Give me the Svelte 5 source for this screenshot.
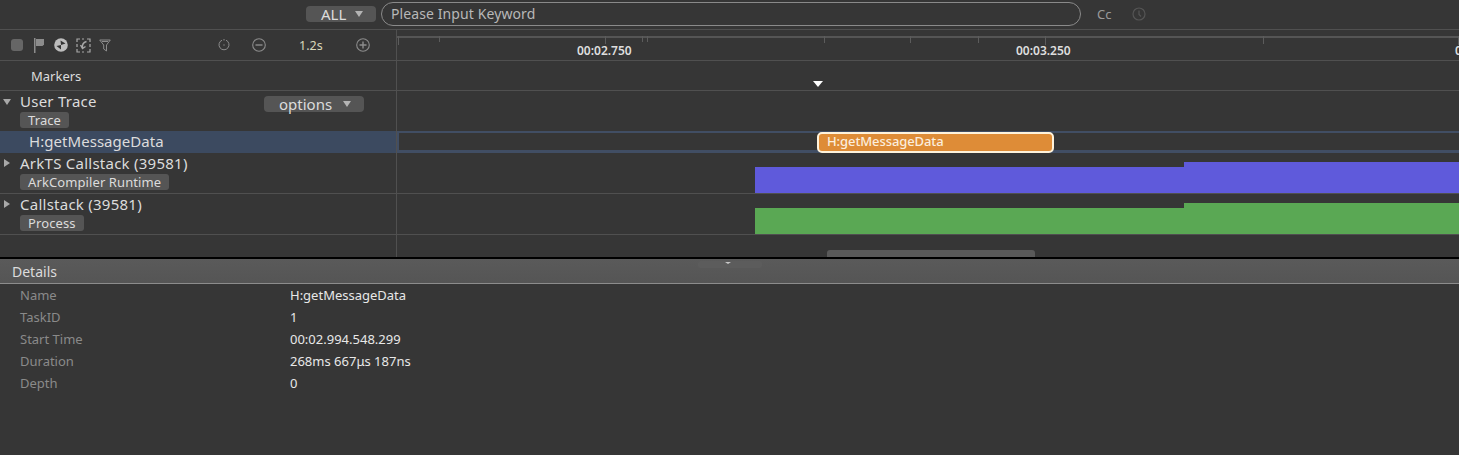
<script>
  const rows = [
    { name: 'ArkTS Callstack (39581)', tag: 'ArkCompiler Runtime', color: '#5f5adb' },
    { name: 'Callstack (39581)', tag: 'Process', color: '#5aa854' },
  ];
  const details = [
    ['Name', 'H:getMessageData'],
    ['TaskID', '1'],
    ['Start Time', '00:02.994.548.299'],
    ['Duration', '268ms 667μs 187ns'],
    ['Depth', '0'],
  ];
  const ticks = [
    { x: 1, h: 9 }, { x: 42, h: 6 }, { x: 208, h: 8 }, { x: 245, h: 6 }, { x: 250, h: 6 }, { x: 427, h: 7 },
    { x: 513, h: 7 }, { x: 581, h: 7 }, { x: 648, h: 9 }, { x: 866, h: 8 }, { x: 1061, h: 9 },
  ];
</script>

<main>
  <header class="search-bar">
    <div class="select all">ALL<span class="caret"></span></div>
    <div class="search">Please Input Keyword</div>
    <span class="cc">Cc</span>
    <svg class="history" width="14" height="14" viewBox="0 0 14 14" fill="none" stroke="#555" stroke-width="1.2">
      <circle cx="7" cy="7" r="6" />
      <path d="M7 3.5V7.5L9 9.5" />
    </svg>
  </header>

  <section class="trace">
    <div class="row toolbar-row">
      <div class="side toolbar">
        <div class="tools">
          <span class="stop"></span>
          <svg class="flag" width="10" height="15" viewBox="0 0 10 15" fill="#8c8c8c"><rect x="0" y="0" width="1.5" height="15" /><path d="M2 1H10V6.500L8.500 8H2Z" /></svg>
          <svg width="14" height="14" viewBox="0 0 14 14"><circle cx="7" cy="7" r="6.800" fill="#bdbdbd" /><path d="M6.500 2.500L11.500 5.500L7 7ZM7 7L2.500 8L7 11.500Z" fill="#333" /></svg>
          <svg width="15" height="15" viewBox="0 0 15 15" fill="none" stroke="#a8a8a8" stroke-width="1.2"><path d="M1 4V1H4M6 1H8M11 1H14V4M14 6V9M14 11V14H11M8 14H6M4 14H1V11M1 9V6" /><path d="M10.500 3.500C7.500 4.500 6 6.500 6.500 9.500M4.500 7L6.500 10.500L9.500 8.500" stroke-width="1.4" /></svg>
          <svg width="12" height="13" viewBox="0 0 12 13" fill="none" stroke="#8c8c8c" stroke-width="1"><path d="M0.700 1H11.300L7.500 6V12L4.700 10V6Z" /><path d="M3 2.500H9" /></svg>
        </div>
        <svg class="reset" width="12" height="12" viewBox="0 0 12 12" fill="none" stroke="#8c8c8c" stroke-width="1"><path d="M4 1.200A5 5 0 1 0 8 1.200" /><path d="M6 0V1.500" /><circle cx="6" cy="6" r="0.700" fill="#8c8c8c" stroke="none" /></svg>
        <svg class="minus" width="14" height="14" viewBox="0 0 14 14" fill="none" stroke="#8c8c8c" stroke-width="1.100"><circle cx="7" cy="7" r="6.300" /><path d="M3.500 7H10.500" stroke-width="1.400" /></svg>
        <span class="scale">1.2s</span>
        <svg class="plus" width="14" height="14" viewBox="0 0 14 14" fill="none" stroke="#8c8c8c" stroke-width="1.100"><circle cx="7" cy="7" r="6.300" /><path d="M3.500 7H10.500M7 3.500V10.500" stroke-width="1.400" /></svg>
      </div>
      <div class="lane ruler">
        <div class="ruler-line"></div>
        {#each ticks as t}
          <span class="tick" style="left: {t.x}px; height: {t.h}px"></span>
        {/each}
        <span class="time" style="left: 180px">00:02.750</span>
        <span class="time" style="left: 619px">00:03.250</span>
        <span class="time" style="left: 1058px">00:03.750</span>
      </div>
    </div>

    <div class="row markers-row">
      <div class="side markers">Markers</div>
      <div class="lane"><span class="marker"></span></div>
    </div>

    <div class="row track">
      <div class="side">
        <div class="track-name"><span class="arrow open"></span>User Trace</div>
        <span class="tag">Trace</span>
        <div class="select options">options<span class="caret"></span></div>
      </div>
      <div class="lane"></div>
    </div>

    <div class="row selected">
      <div class="side">H:getMessageData</div>
      <div class="lane">
        <div class="slice">H:getMessageData</div>
      </div>
    </div>

    {#each rows as r}
      <div class="row track">
        <div class="side">
          <div class="track-name"><span class="arrow"></span>{r.name}</div>
          <span class="tag">{r.tag}</span>
        </div>
        <div class="lane">
          <span class="area low" style="background: {r.color}"></span>
          <span class="area high" style="background: {r.color}"></span>
        </div>
      </div>
    {/each}

    <div class="row empty">
      <div class="side"></div>
      <div class="lane"><span class="scrollbar"></span></div>
    </div>
  </section>

  <section class="details">
    <div class="details-title">Details<span class="grip"></span></div>
    <div class="details-body">
      {#each details as [label, value]}
        <div class="detail">
          <span class="label">{label}</span>
          <span class="value">{value}</span>
        </div>
      {/each}
    </div>
  </section>
</main>

<style>
  :global(body) {
    margin: 0;
    background: #363636;
    overflow: hidden;
  }

  main {
    width: 1459px;
    height: 455px;
    overflow: hidden;
    background: #363636;
    color: #d8d8d8;
    font-family: "Noto Sans", "Liberation Sans", sans-serif;
    font-size: 14px;
    display: flex;
    flex-direction: column;
  }

  .search-bar {
    height: 28px;
    padding-bottom: 1px;
    flex: none;
    display: flex;
    align-items: center;
    padding-left: 306px;
    border-bottom: 1px solid #505050;
  }

  .select {
    display: flex;
    align-items: center;
    background: #555;
    border-radius: 4px;
    color: #dcdcdc;
    font-size: 15px;
    line-height: 16px;
  }

  .all {
    width: 70px;
    height: 16px;
    padding-left: 15px;
    box-sizing: border-box;
  }

  .caret {
    width: 0;
    height: 0;
    border-left: 4.5px solid transparent;
    border-right: 4.5px solid transparent;
    border-top: 6px solid #b4b4b4;
    margin-left: 9px;
  }

  .search {
    width: 700px;
    height: 24px;
    margin-left: 5px;
    padding-left: 9px;
    box-sizing: border-box;
    border: 1px solid #8a8a8a;
    border-radius: 12px;
    line-height: 22px;
    color: #b8b8b8;
    letter-spacing: 0.1px;
  }

  .cc {
    margin-left: 16px;
    color: #9a9a9a;
    font-size: 13px;
  }

  .history {
    margin-left: 21px;
  }

  .trace {
    height: 227px;
    flex: none;
  }

  .row {
    display: flex;
    border-bottom: 1px solid #505050;
  }

  .side {
    position: relative;
    width: 397px;
    flex: none;
    box-sizing: border-box;
    border-right: 1px solid #505050;
  }

  .lane {
    position: relative;
    flex: 1;
    overflow: hidden;
  }

  .toolbar-row {
    height: 30px;
  }

  .toolbar {
    display: flex;
    align-items: center;
  }

  .tools {
    display: flex;
    align-items: center;
    gap: 8px;
    margin-left: 11px;
    width: 207px;
  }

  .flag {
    margin-right: 2px;
  }

  .stop {
    width: 12px;
    height: 12px;
    background: #666;
    border-radius: 3px;
    margin-right: 3px;
  }

  .minus {
    margin-left: 22px;
  }

  .scale {
    width: 33px;
    margin-left: 33px;
    color: #d8d8bc;
    font-size: 12.5px;
  }

  .plus {
    margin-left: 24px;
  }

  .ruler-line {
    height: 2px;
    margin-top: 6px;
    background: #555;
  }

  .tick {
    position: absolute;
    top: 6px;
    width: 1px;
    background: #5c5c5c;
  }

  .time {
    position: absolute;
    top: 13px;
    font-size: 12px;
    font-weight: 600;
    line-height: 16px;
    color: #dedede;
  }

  .markers-row {
    height: 29px;
  }

  .markers {
    padding-left: 31px;
    font-size: 13px;
    line-height: 31px;
    color: #dcdcdc;
  }

  .marker {
    position: absolute;
    left: 416px;
    top: 20px;
    width: 0;
    height: 0;
    border-left: 5px solid transparent;
    border-right: 5px solid transparent;
    border-top: 6px solid #fff;
  }

  .track {
    height: 40px;
  }

  .track-name {
    position: relative;
    padding-left: 20px;
    padding-top: 1px;
    line-height: 18px;
    color: #dcdcdc;
    font-size: 15px;
    letter-spacing: 0.25px;
  }

  .arrow {
    position: absolute;
    left: 4px;
    top: 6px;
    width: 0;
    height: 0;
    border-top: 4px solid transparent;
    border-bottom: 4px solid transparent;
    border-left: 6px solid #a8a8a8;
  }

  .arrow.open {
    left: 3px;
    top: 8px;
    border-left: 4px solid transparent;
    border-right: 4px solid transparent;
    border-top: 6px solid #a8a8a8;
    border-bottom: 0;
  }

  .tag {
    display: inline-block;
    margin: 1px 0 0 20px;
    padding: 0 8px;
    height: 16px;
    line-height: 16px;
    background: #555;
    border-radius: 3px;
    font-size: 13px;
    letter-spacing: 0.1px;
    color: #dcdcdc;
  }

  .options {
    position: absolute;
    left: 264px;
    top: 5px;
    width: 100px;
    height: 16px;
    padding-left: 15px;
    box-sizing: border-box;
    line-height: 15px;
  }

  .options .caret {
    margin-left: 11px;
  }

  .selected {
    height: 22px;
    margin-top: -1px;
    border-bottom: 0;
  }

  .selected .side {
    background: #3c4a60;
    padding-left: 29px;
    line-height: 21px;
    font-size: 15px;
    letter-spacing: 0.05px;
    color: #dcdcdc;
  }

  .selected .lane {
    overflow: visible;
    border: 2px solid #414e64;
    border-right: 0;
    border-bottom-width: 3px;
  }

  .slice {
    position: absolute;
    left: 418px;
    top: -1px;
    width: 237px;
    height: 21px;
    box-sizing: border-box;
    background: #de8c37;
    border: 2px solid #fff3dc;
    border-radius: 5px;
    padding-left: 8px;
    line-height: 15px;
    font-size: 13px;
    font-weight: 500;
    letter-spacing: -0.1px;
    color: #fbeedd;
  }

  .area {
    position: absolute;
    bottom: 0;
    right: 0;
  }

  .area.low {
    left: 358px;
    height: 26px;
  }

  .area.high {
    left: 787px;
    height: 31px;
  }

  .empty {
    height: 22px;
    border-bottom: 0;
  }

  .scrollbar {
    position: absolute;
    left: 430px;
    bottom: 0;
    width: 208px;
    height: 7px;
    border-radius: 3px 3px 0 0;
    background: #5a5a5a;
  }

  .details {
    flex: 1;
    border-top: 2px solid #000;
  }

  .details-title {
    position: relative;
    height: 24px;
    padding-left: 12px;
    background: linear-gradient(#5a5a5a, #555);
    border-bottom: 1px solid #8c8c8c;
    line-height: 25px;
    font-size: 14px;
    color: #dcdcdc;
  }

  .details-title::before {
    content: "";
    position: absolute;
    left: 698px;
    top: 2px;
    width: 64px;
    height: 7px;
    background: #5c5c5c;
    border-radius: 2px;
  }

  .grip {
    position: absolute;
    left: 725px;
    top: 3px;
    width: 0;
    height: 0;
    border-left: 3px solid transparent;
    border-right: 3px solid transparent;
    border-top: 2px solid #c8c8c8;
  }

  .detail {
    display: flex;
    height: 22px;
    align-items: center;
    font-size: 13px;
  }

  .label {
    width: 270px;
    margin-left: 20px;
    color: #8a8a8a;
  }

  .value {
    color: #e8e8e8;
  }
</style>
